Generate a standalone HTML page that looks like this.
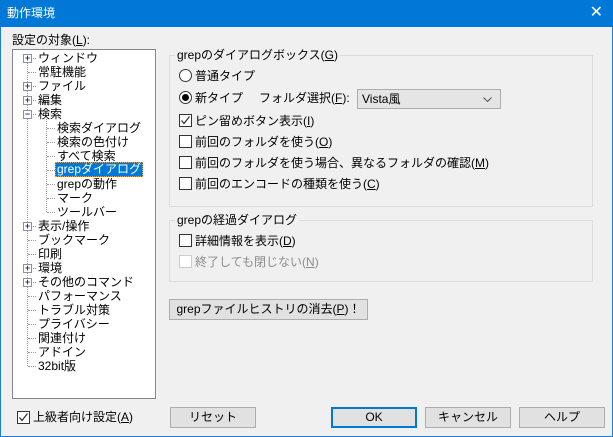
<!DOCTYPE html>
<html><head><meta charset="utf-8"><style>
*{box-sizing:border-box;margin:0;padding:0}
body{width:613px;height:437px;overflow:hidden;background:#f0f0f0;font-family:"Liberation Sans","Noto Sans CJK JP",sans-serif;font-size:12px;color:#000;position:relative}
.a{position:absolute;white-space:nowrap;line-height:14px}
#frame{position:absolute;left:0;top:0;width:613px;height:437px;border:1px solid #1a7fd8}
#title{position:absolute;left:0;top:0;width:613px;height:27px;background:#0078d7;color:#fff;font-size:12px;line-height:26px;padding-left:7px}
#tree{position:absolute;left:12px;top:49px;width:144px;height:350px;background:#fff;border:1px solid #828790}
.pm{position:absolute;width:9px;height:9px;border:1px solid #919191;background:#fff;font-size:9px;line-height:7px;text-align:center;color:#1f3f8f;font-weight:bold}
.dh{position:absolute;border-top:1px dotted #999;height:0}
.dv{position:absolute;border-left:1px dotted #999;width:0}
.grp{position:absolute;border:1px solid #dcdcdc}
.gt{position:absolute;background:#f0f0f0;padding:0 2px;line-height:14px}
.cb{position:absolute;width:13px;height:13px;border:1px solid #333;background:#fff}
.rb{position:absolute;width:13px;height:13px;border:1px solid #333;border-radius:50%;background:#fff}
.btn{position:absolute;background:#e1e1e1;border:1px solid #adadad;text-align:center;line-height:19px}
</style></head><body>
<div id="frame"></div>
<div id="title">動作環境<span style="position:absolute;right:10px;top:0;font-size:16px">✕</span></div>
<div class="a" style="left:12px;top:33px">設定の対象(<u>L</u>):</div>
<div id="tree"></div>
<div class="dv" style="left:27px;top:56px;height:310px"></div>
<div class="dv" style="left:46px;top:119px;height:93px"></div>
<div id="tl"></div>
<script>
var items=[[0,'ウィンドウ',1],[0,'常駐機能',0],[0,'ファイル',1],[0,'編集',1],[0,'検索',2],[1,'検索ダイアログ'],[1,'検索の色付け'],[1,'すべて検索'],[1,'grepダイアログ',0,1],[1,'grepの動作'],[1,'マーク'],[1,'ツールバー'],[0,'表示/操作',1],[0,'ブックマーク'],[0,'印刷'],[0,'環境',1],[0,'その他のコマンド',1],[0,'パフォーマンス'],[0,'トラブル対策'],[0,'プライバシー'],[0,'関連付け'],[0,'アドイン'],[0,'32bit版']];
var h='';
items.forEach(function(it,i){var y=51+i*14;var cy=y+7;
if(it[0]==0){h+='<div class="dh" style="left:28px;top:'+cy+'px;width:8px"></div>';
if(it[2])h+='<div class="pm" style="left:23px;top:'+(cy-4)+'px">'+(it[2]==2?'−':'+')+'</div>';
h+='<div class="a" style="left:38px;top:'+y+'px">'+it[1]+'</div>';}
else{h+='<div class="dh" style="left:47px;top:'+cy+'px;width:8px"></div>';
if(it[3])h+='<div class="a" style="left:55px;top:'+(y-1)+'px;height:15px;background:#0078d7;color:#fff;outline:1px dotted #f0a030;outline-offset:-1px;padding:0 2px;line-height:15px">'+it[1]+'</div>';
else h+='<div class="a" style="left:57px;top:'+y+'px">'+it[1]+'</div>';}
});
document.getElementById('tl').innerHTML=h;
</script>
<div class="grp" style="left:169px;top:55px;width:424px;height:152px"></div>
<div class="gt" style="left:175px;top:48px">grepのダイアログボックス(<u>G</u>)</div>
<div class="rb" style="left:179px;top:69px"></div>
<div class="a" style="left:195px;top:69px">普通タイプ</div>
<div class="rb" style="left:179px;top:91px"><div style="position:absolute;left:2px;top:2px;width:7px;height:7px;border-radius:50%;background:#000"></div></div>
<div class="a" style="left:195px;top:91px">新タイプ</div>
<div class="a" style="left:259px;top:91px">フォルダ選択(<u>F</u>):</div>
<div class="a" style="left:357px;top:89px;width:144px;height:20px;background:#e5e5e5;border:1px solid #adadad;line-height:18px;padding-left:4px">Vista風<svg width="9" height="6" style="position:absolute;right:8px;top:7px"><path d="M0.5 0.5 L4.5 4.5 L8.5 0.5" stroke="#555" fill="none"/></svg></div>
<div class="cb" style="left:179px;top:114px"><svg width="11" height="11" style="position:absolute;left:0;top:0"><path d="M1.5 5.5 L4 8.5 L9.5 1.5" stroke="#333" stroke-width="1.3" fill="none"/></svg></div>
<div class="a" style="left:195px;top:114px">ピン留めボタン表示(<u>I</u>)</div>
<div class="cb" style="left:179px;top:135px"></div>
<div class="a" style="left:195px;top:135px">前回のフォルダを使う(<u>O</u>)</div>
<div class="cb" style="left:179px;top:156px"></div>
<div class="a" style="left:195px;top:156px">前回のフォルダを使う場合、異なるフォルダの確認(<u>M</u>)</div>
<div class="cb" style="left:179px;top:177px"></div>
<div class="a" style="left:195px;top:177px">前回のエンコードの種類を使う(<u>C</u>)</div>
<div class="grp" style="left:169px;top:220px;width:424px;height:62px"></div>
<div class="gt" style="left:175px;top:213px">grepの経過ダイアログ</div>
<div class="cb" style="left:179px;top:234px"></div>
<div class="a" style="left:195px;top:234px">詳細情報を表示(<u>D</u>)</div>
<div class="cb" style="left:179px;top:255px;border-color:#ccc"></div>
<div class="a" style="left:195px;top:255px;color:#8d8d8d">終了しても閉じない(<u>N</u>)</div>
<div class="btn" style="left:169px;top:299px;width:199px;height:21px">grepファイルヒストリの消去(<u>P</u>)！</div>
<div class="cb" style="left:17px;top:411px"><svg width="11" height="11" style="position:absolute;left:0;top:0"><path d="M1.5 5.5 L4 8.5 L9.5 1.5" stroke="#333" stroke-width="1.3" fill="none"/></svg></div>
<div class="a" style="left:33px;top:410px">上級者向け設定(<u>A</u>)</div>
<div class="btn" style="left:170px;top:407px;width:86px;height:21px">リセット</div>
<div class="btn" style="left:331px;top:407px;width:86px;height:21px;border:2px solid #0078d7;line-height:17px">OK</div>
<div class="btn" style="left:425px;top:407px;width:86px;height:21px">キャンセル</div>
<div class="btn" style="left:519px;top:407px;width:86px;height:21px">ヘルプ</div>
</body></html>
